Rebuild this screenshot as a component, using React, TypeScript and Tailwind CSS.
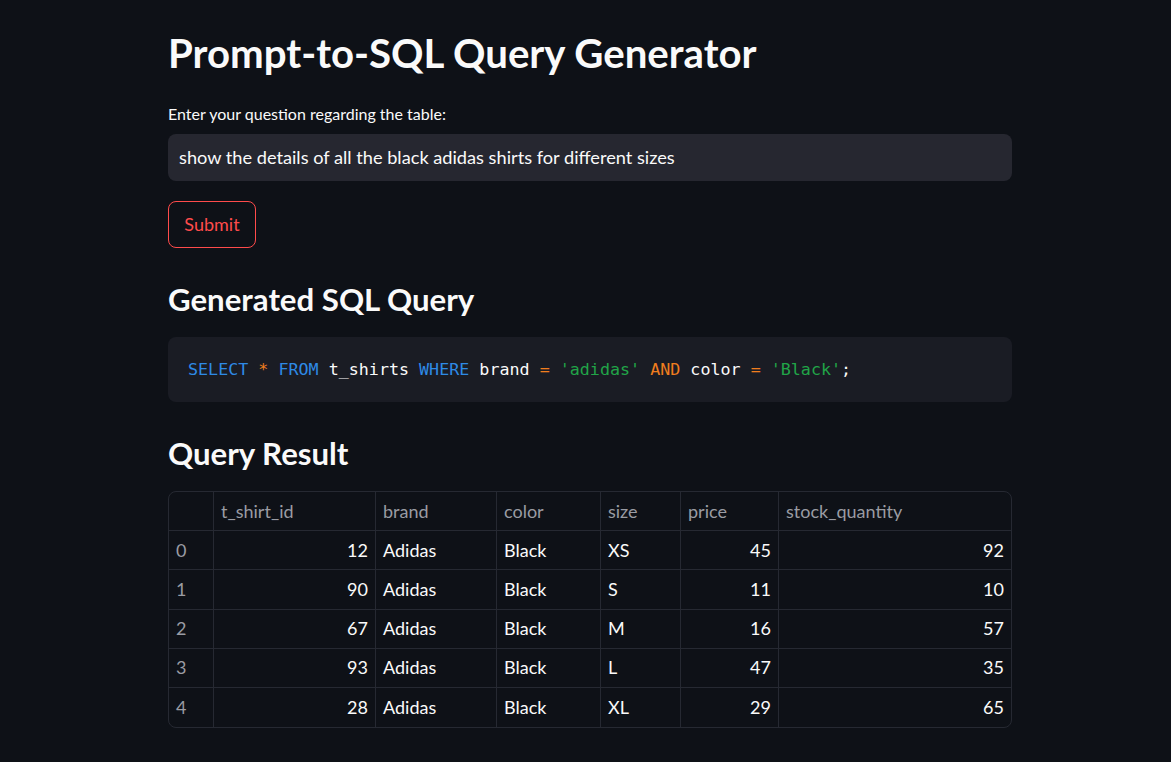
import React from "react";

const cols = [
  { name: "", w: "w-[44px]", right: false },
  { name: "t_shirt_id", w: "w-[162px]", right: true },
  { name: "brand", w: "w-[121px]", right: false },
  { name: "color", w: "w-[104px]", right: false },
  { name: "size", w: "w-[80px]", right: false },
  { name: "price", w: "w-[98px]", right: true },
  { name: "stock_quantity", w: "flex-1", right: true },
];

const rows = [
  ["0", "12", "Adidas", "Black", "XS", "45", "92"],
  ["1", "90", "Adidas", "Black", "S", "11", "10"],
  ["2", "67", "Adidas", "Black", "M", "16", "57"],
  ["3", "93", "Adidas", "Black", "L", "47", "35"],
  ["4", "28", "Adidas", "Black", "XL", "29", "65"],
];

const sans = { fontFamily: '"Lato", "Noto Sans", sans-serif' };

export default function App() {
  return (
    <div className="min-h-[762px] w-full bg-[#0e1117] text-[#fafafa]" style={sans}>
      <div className="pl-[168px] pt-[25px]">
        <div className="w-[844px] flex flex-col">
          <h1 className="text-[40.2px] font-bold leading-[56px] h-[56px]">Prompt-to-SQL Query Generator</h1>
          <div className="mt-[23px] text-[16px] leading-[20px] h-[20px]">Enter your question regarding the table:</div>
          <div className="mt-[10px] h-[47px] rounded-[8px] bg-[#262730] flex items-center pl-[11px] text-[18.2px]">
            show the details of all the black adidas shirts for different sizes
          </div>
          <div className="mt-[20px]">
            <button className="h-[47px] w-[88px] rounded-[8px] border border-[#ff4b4b] text-[#ff4b4b] text-[18px] flex items-center justify-center bg-transparent">
              Submit
            </button>
          </div>
          <h2 className="mt-[31px] text-[31.2px] font-bold leading-[40px] h-[40px]">Generated SQL Query</h2>
          <div
            className="mt-[18px] h-[65px] rounded-[8px] bg-[#1a1c24] flex items-center pl-[20px] text-[16.7px] whitespace-pre"
            style={{ fontFamily: '"DejaVu Sans Mono", "Liberation Mono", monospace' }}
          >
            <span className="text-[#2e8ae6]">SELECT</span>
            <span> </span>
            <span className="text-[#f07d1e]">*</span>
            <span> </span>
            <span className="text-[#2e8ae6]">FROM</span>
            <span> t_shirts </span>
            <span className="text-[#2e8ae6]">WHERE</span>
            <span> brand </span>
            <span className="text-[#f07d1e]">=</span>
            <span> </span>
            <span className="text-[#21a448]">'adidas'</span>
            <span> </span>
            <span className="text-[#f07d1e]">AND</span>
            <span> color </span>
            <span className="text-[#f07d1e]">=</span>
            <span> </span>
            <span className="text-[#21a448]">'Black'</span>
            <span>;</span>
          </div>
          <h2 className="mt-[31px] text-[31.2px] font-bold leading-[40px] h-[40px]">Query Result</h2>
          <div className="mt-[18px] rounded-[8px] border border-[#262932] overflow-hidden text-[18px]">
            <div className="flex h-[39.2px] border-b border-[#262932] text-[#9a9ca3]">
              {cols.map((c, i) => (
                <div
                  key={i}
                  className={`${c.w} ${i > 0 ? "border-l border-[#262932]" : ""} flex items-center px-[7px]`}
                >
                  {c.name}
                </div>
              ))}
            </div>
            {rows.map((r, ri) => (
              <div
                key={ri}
                className={`flex h-[39.2px] ${ri < rows.length - 1 ? "border-b border-[#262932]" : ""}`}
              >
                {r.map((v, i) => (
                  <div
                    key={i}
                    className={`${cols[i].w} ${i > 0 ? "border-l border-[#262932]" : ""} flex items-center px-[7px] ${
                      cols[i].right ? "justify-end" : ""
                    } ${i === 0 ? "text-[#9a9ca3]" : ""}`}
                  >
                    {v}
                  </div>
                ))}
              </div>
            ))}
          </div>
        </div>
      </div>
    </div>
  );
}
